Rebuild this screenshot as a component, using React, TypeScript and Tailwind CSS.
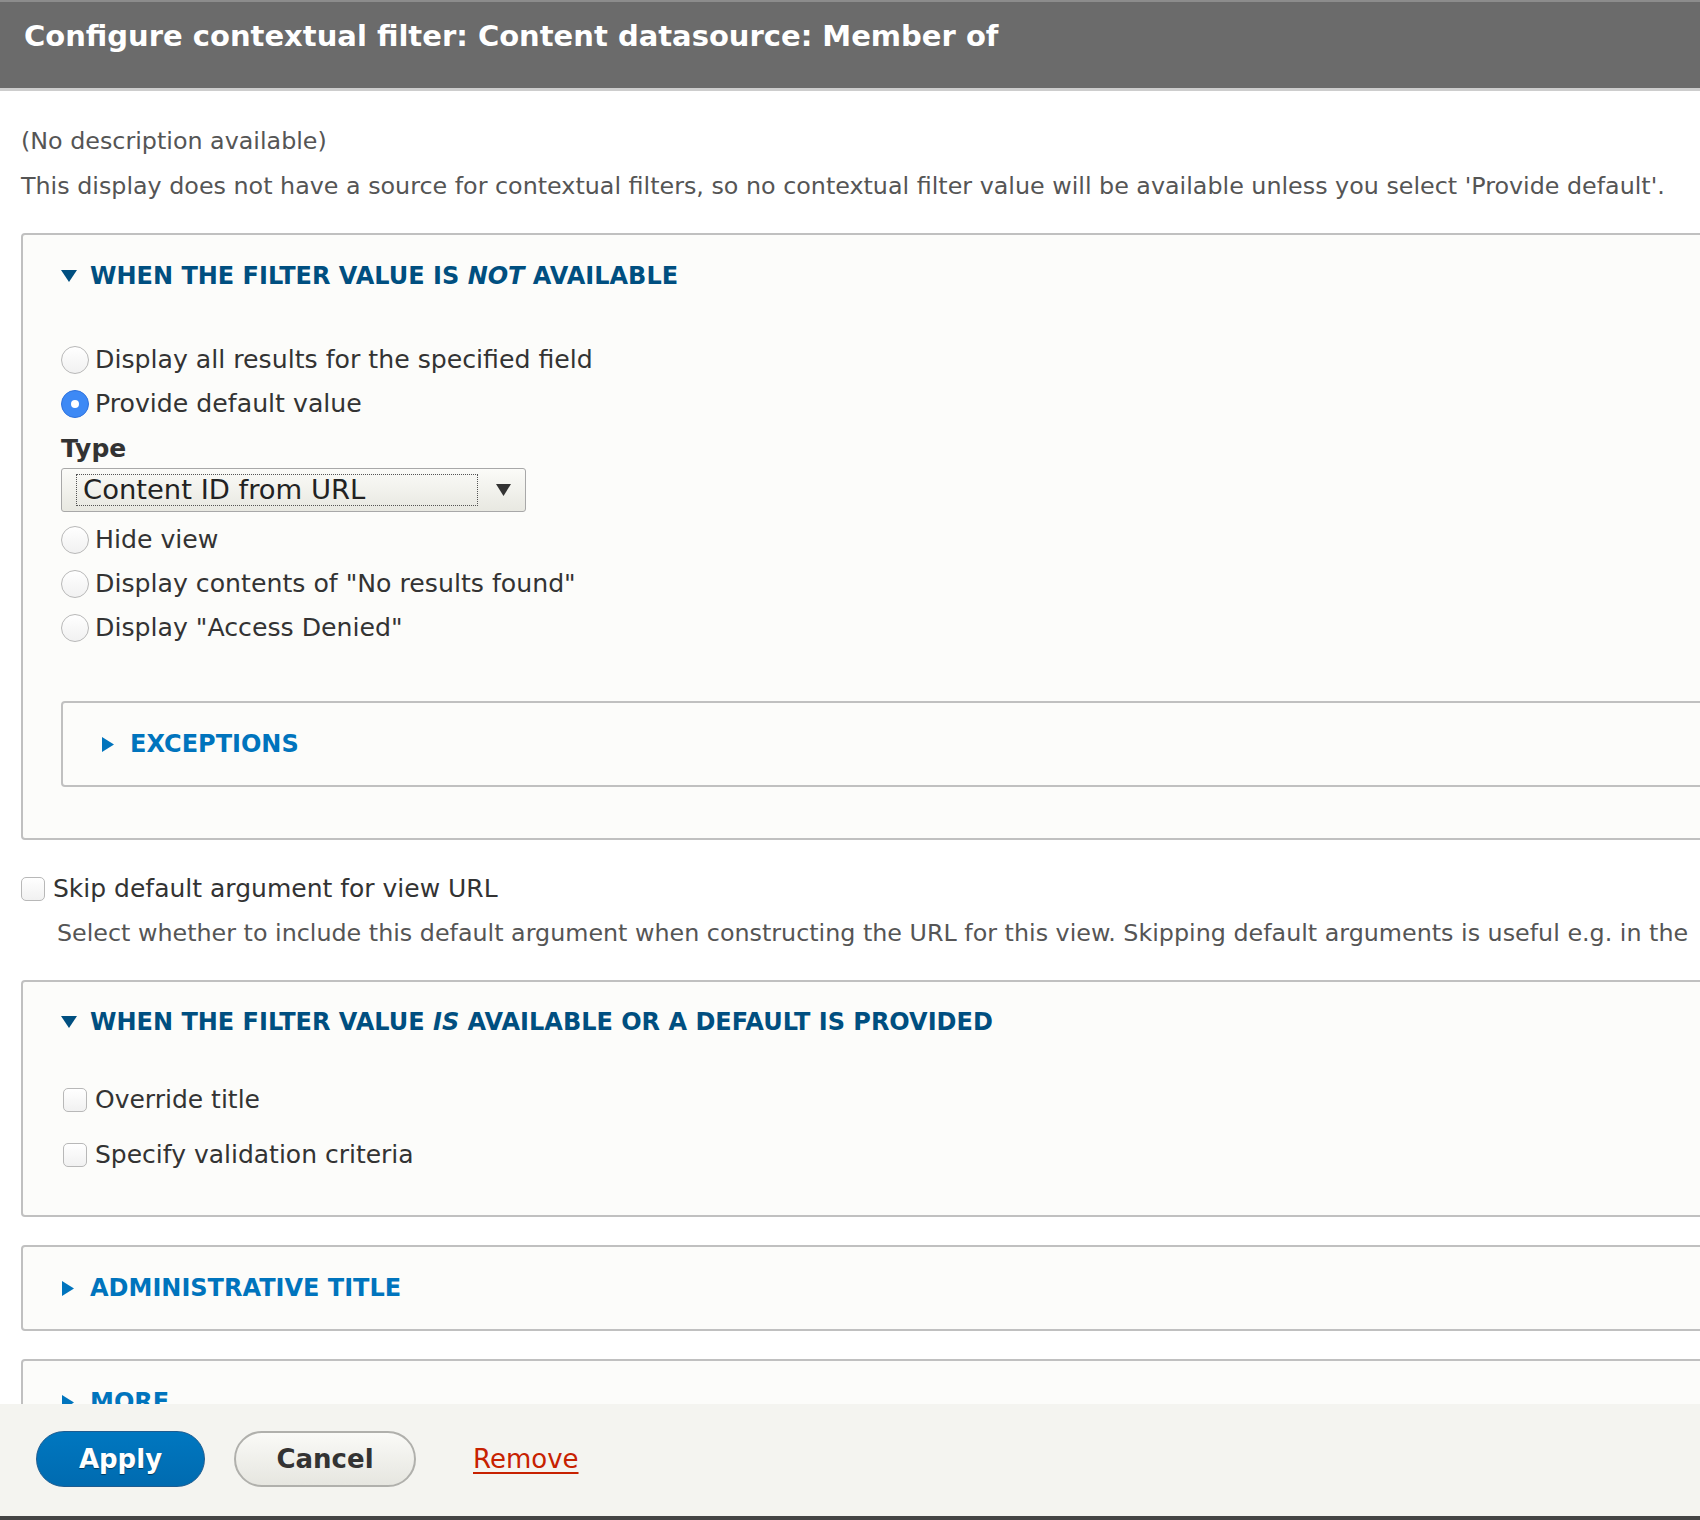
import React from 'react';

const font = { fontFamily: '"DejaVu Sans", "Liberation Sans", sans-serif' };

function DownArrow() {
  return (
    <svg width="16" height="12" viewBox="0 0 16 12" className="shrink-0">
      <polygon points="0,0 16,0 8,12" fill="#004f80" />
    </svg>
  );
}

function RightArrow() {
  return (
    <svg width="12" height="15" viewBox="0 0 12 15" className="shrink-0">
      <polygon points="0,0 12,7.5 0,15" fill="#0074bd" />
    </svg>
  );
}

function Radio({ checked = false }: { checked?: boolean }) {
  if (checked) {
    return (
      <span className="w-[28px] h-[28px] rounded-full bg-[#3d89f5] border border-[#2f72dc] flex items-center justify-center shrink-0">
        <span className="w-[8px] h-[8px] rounded-full bg-white" />
      </span>
    );
  }
  return (
    <span className="w-[28px] h-[28px] rounded-full border-[1.5px] border-[#b8b8b8] bg-gradient-to-b from-white to-[#f1f1f1] shrink-0" />
  );
}

function Checkbox() {
  return (
    <span className="w-[24px] h-[24px] rounded-[5px] border-[1.5px] border-[#b8b8b8] bg-gradient-to-b from-white to-[#f1f1f1] shrink-0" />
  );
}

function RadioRow({ label, checked }: { label: string; checked?: boolean }) {
  return (
    <div className="h-[44px] flex items-center gap-[6px]">
      <Radio checked={checked} />
      <span className="text-[25.2px] text-[#333]">{label}</span>
    </div>
  );
}

function CollapsedFieldset({ title, className }: { title: string; className?: string }) {
  return (
    <div className={'border-2 border-[#c0c0c0] rounded-[4px] bg-[#fcfcfa] ' + (className ?? '')}>
      <div className="h-[82px] flex items-center gap-[16px] pl-[39px]">
        <RightArrow />
        <span className="text-[24px] font-bold text-[#0074bd] uppercase">{title}</span>
      </div>
    </div>
  );
}

export default function App() {
  return (
    <div className="w-[1700px] h-[1520px] flex flex-col overflow-hidden bg-white" style={font}>
      <div className="h-[91px] shrink-0 bg-[#6b6b6b] border-t-2 border-[#8c8c8c] border-b-[3px] border-b-[#cdcdcd] flex items-center pl-[24px] pb-[16px]">
        <h1 className="text-[29px] font-bold text-white">Configure contextual filter: Content datasource: Member of</h1>
      </div>

      <div className="flex-1 overflow-hidden">
        <div className="w-[2000px] pl-[21px] pt-[35px]">
          <p className="text-[23.8px] leading-[30px] text-[#555]">(No description available)</p>
          <p className="mt-[15px] text-[23.8px] leading-[30px] text-[#555]">
            This display does not have a source for contextual filters, so no contextual filter value will be available unless you select 'Provide default'.
          </p>

          <div className="mt-[32px] border-2 border-[#c0c0c0] rounded-[4px] bg-[#fcfcfa] pt-[26px] pb-[51px] pl-[38px]">
            <div className="h-[30px] flex items-center gap-[13px]">
              <DownArrow />
              <span className="text-[24px] font-bold text-[#004f80]">
                WHEN THE FILTER VALUE IS <em>NOT</em> AVAILABLE
              </span>
            </div>
            <div className="mt-[47px]">
              <RadioRow label="Display all results for the specified field" />
              <RadioRow label="Provide default value" checked />
              <div className="mt-[8px] text-[25px] leading-[30px] font-bold text-[#333]">Type</div>
              <div className="mt-[4px] w-[465px] h-[44px] rounded-[3px] border-[1.5px] border-[#a8a8a8] bg-gradient-to-b from-[#fbfbf8] to-[#e8e8e1] flex items-center pl-[14px] pr-[14px]">
                <div className="flex-1 h-[32px] border border-dotted border-[#555] flex items-center pl-[6px]">
                  <span className="text-[27.4px] text-[#222]">Content ID from URL</span>
                </div>
                <svg width="15" height="12" viewBox="0 0 15 12" className="ml-[18px]">
                  <polygon points="0,0 15,0 7.5,12" fill="#333" />
                </svg>
              </div>
              <div className="mt-[6px]">
                <RadioRow label="Hide view" />
                <RadioRow label={'Display contents of "No results found"'} />
                <RadioRow label={'Display "Access Denied"'} />
              </div>
            </div>
            <CollapsedFieldset title="Exceptions" className="mt-[51px]" />
          </div>

          <div className="mt-[34px] h-[30px] flex items-center gap-[8px]">
            <Checkbox />
            <span className="text-[25px] text-[#333]">Skip default argument for view URL</span>
          </div>
          <p className="mt-[14px] pl-[36px] text-[23.8px] leading-[30px] text-[#555]">
            Select whether to include this default argument when constructing the URL for this view. Skipping default arguments is useful e.g. in the
          </p>

          <div className="mt-[32px] border-2 border-[#c0c0c0] rounded-[4px] bg-[#fcfcfa] pt-[25px] pb-[45px] pl-[38px]">
            <div className="h-[30px] flex items-center gap-[13px]">
              <DownArrow />
              <span className="text-[24px] font-bold text-[#004f80]">
                WHEN THE FILTER VALUE <em>IS</em> AVAILABLE OR A DEFAULT IS PROVIDED
              </span>
            </div>
            <div className="mt-[48px] h-[30px] flex items-center gap-[8px] pl-[2px]">
              <Checkbox />
              <span className="text-[25px] text-[#333]">Override title</span>
            </div>
            <div className="mt-[25px] h-[30px] flex items-center gap-[8px] pl-[2px]">
              <Checkbox />
              <span className="text-[25px] text-[#333]">Specify validation criteria</span>
            </div>
          </div>

          <CollapsedFieldset title="Administrative title" className="mt-[28px]" />
          <CollapsedFieldset title="More" className="mt-[28px]" />
        </div>
      </div>

      <div className="h-[116px] shrink-0 bg-[#f4f4f0] border-b-4 border-[#444] flex items-center pl-[36px] pb-[2px]">
        <button className="w-[169px] h-[56px] rounded-full bg-gradient-to-b from-[#0077c0] to-[#006bb0] border border-[#1e5c90] text-white text-[26px] font-bold [text-shadow:0_1px_1px_rgba(0,0,0,0.5)]">
          Apply
        </button>
        <button className="ml-[29px] w-[182px] h-[56px] rounded-full bg-gradient-to-b from-[#fafaf7] to-[#e6e6e0] border-2 border-[#b0b0ac] text-[#333] text-[26px] font-bold">
          Cancel
        </button>
        <a className="ml-[57px] text-[26px] text-[#c72100] underline underline-offset-[4px]">Remove</a>
      </div>
    </div>
  );
}
